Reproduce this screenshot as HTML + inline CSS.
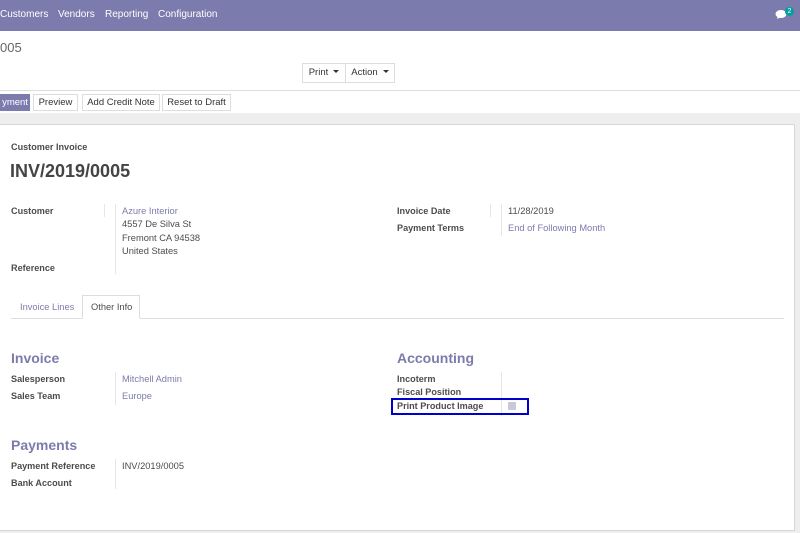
<!DOCTYPE html>
<html><head><meta charset="utf-8"><style>
*{margin:0;padding:0;box-sizing:border-box}
body{width:800px;height:533px;overflow:hidden;position:relative;background:#fff;font-family:"Liberation Sans",sans-serif;color:#4c4c4c;font-size:9.5px}
.a{position:absolute;white-space:nowrap}
.nav{position:absolute;left:0;top:0;width:800px;height:31px;background:#7c7bad}
.nav span{position:absolute;top:9px;color:#fff;font-size:10px}
.btn{position:absolute;height:18px;border:1px solid #ddd;background:#fff;font-size:9.5px;color:#333;text-align:center;line-height:16px}
.caret{display:inline-block;border-left:3px solid transparent;border-right:3px solid transparent;border-top:3px solid #333;vertical-align:middle;margin-left:5px;margin-top:-2px}
.lbl{position:absolute;font-weight:bold;color:#4c4c4c;font-size:9.1px;white-space:nowrap}
.val{position:absolute;font-size:9.3px;white-space:nowrap;color:#4c4c4c}
.lnk{color:#7c7bad}
.vl{position:absolute;width:1px;background:#e6e6e6}
.h{position:absolute;color:#7c7bad;font-size:14px;font-weight:bold}
</style></head><body>
<div class="nav">
<span style="left:0">Customers</span><span style="left:58px">Vendors</span><span style="left:105px">Reporting</span><span style="left:158px">Configuration</span>
<svg style="position:absolute;left:775px;top:9px" width="12" height="11"><ellipse cx="6" cy="5" rx="5.5" ry="4" fill="#fff"/><path d="M3 7 L2 10 L6 8z" fill="#fff"/></svg>
<div style="position:absolute;left:785px;top:7px;width:9px;height:9px;border-radius:5px;background:#00a09d;color:#fff;font-size:7px;text-align:center;line-height:9px">2</div>
</div>
<div class="a" style="left:0;top:40px;font-size:13px;color:#666">005</div>
<div class="btn" style="left:302px;top:63px;width:44px;height:20px;line-height:18px">Print<span class="caret"></span></div>
<div class="btn" style="left:345px;top:63px;width:50px;height:20px;line-height:18px">Action<span class="caret"></span></div>
<div style="position:absolute;left:0;top:90px;width:800px;height:1px;background:#ddd"></div>
<div class="btn" style="left:0;top:94px;width:30px;height:17px;background:#7c7bad;border-color:#7c7bad;color:#fff">yment</div>
<div class="btn" style="left:33px;top:94px;width:45px;height:17px">Preview</div>
<div class="btn" style="left:82px;top:94px;width:78px;height:17px">Add Credit Note</div>
<div class="btn" style="left:162px;top:94px;width:69px;height:17px">Reset to Draft</div>
<div style="position:absolute;left:0;top:113px;width:800px;height:420px;background:#eeeeee"></div>
<div style="position:absolute;left:0;top:124px;width:795px;height:407px;background:#fff;border:1px solid #d8d8d8;border-left:none"></div>
<div class="lbl" style="left:11px;top:142px">Customer Invoice</div>
<div class="a" style="left:10px;top:161px;font-size:18px;font-weight:bold;color:#444">INV/2019/0005</div>
<div class="lbl" style="left:11px;top:206px">Customer</div>
<div class="vl" style="left:104px;top:204px;height:13px"></div>
<div class="vl" style="left:115px;top:204px;height:70px"></div>
<div class="val lnk" style="left:122px;top:206px">Azure Interior</div>
<div class="val" style="left:122px;top:219px">4557 De Silva St</div>
<div class="val" style="left:122px;top:233px">Fremont CA 94538</div>
<div class="val" style="left:122px;top:246px">United States</div>
<div class="lbl" style="left:11px;top:263px">Reference</div>
<div class="lbl" style="left:397px;top:206px">Invoice Date</div>
<div class="lbl" style="left:397px;top:223px">Payment Terms</div>
<div class="vl" style="left:490px;top:204px;height:13px"></div>
<div class="vl" style="left:501px;top:204px;height:32px"></div>
<div class="val" style="left:508px;top:206px">11/28/2019</div>
<div class="val lnk" style="left:508px;top:223px">End of Following Month</div>
<div style="position:absolute;left:11px;top:318px;width:773px;height:1px;background:#ddd"></div>
<div class="val lnk" style="left:20px;top:302px">Invoice Lines</div>
<div style="position:absolute;left:82px;top:295px;width:58px;height:24px;border:1px solid #ddd;border-bottom:1px solid #fff;background:#fff"></div>
<div class="val" style="left:91px;top:302px">Other Info</div>
<div class="h" style="left:11px;top:350px">Invoice</div>
<div class="lbl" style="left:11px;top:374px">Salesperson</div>
<div class="lbl" style="left:11px;top:391px">Sales Team</div>
<div class="vl" style="left:115px;top:372px;height:33px"></div>
<div class="val lnk" style="left:122px;top:374px">Mitchell Admin</div>
<div class="val lnk" style="left:122px;top:391px">Europe</div>
<div class="h" style="left:397px;top:350px">Accounting</div>
<div class="lbl" style="left:397px;top:374px">Incoterm</div>
<div class="lbl" style="left:397px;top:387px">Fiscal Position</div>
<div class="vl" style="left:501px;top:372px;height:44px"></div>
<div style="position:absolute;left:391px;top:398px;width:138px;height:17px;border:2px solid #0000cc"></div>
<div class="lbl" style="left:397px;top:401px">Print Product Image</div>
<div style="position:absolute;left:508px;top:402px;width:8px;height:8px;background:#c8c8d8;border-radius:1px"></div>
<div class="h" style="left:11px;top:437px">Payments</div>
<div class="lbl" style="left:11px;top:461px">Payment Reference</div>
<div class="lbl" style="left:11px;top:478px">Bank Account</div>
<div class="vl" style="left:115px;top:459px;height:30px"></div>
<div class="val" style="left:122px;top:461px">INV/2019/0005</div>
</body></html>
